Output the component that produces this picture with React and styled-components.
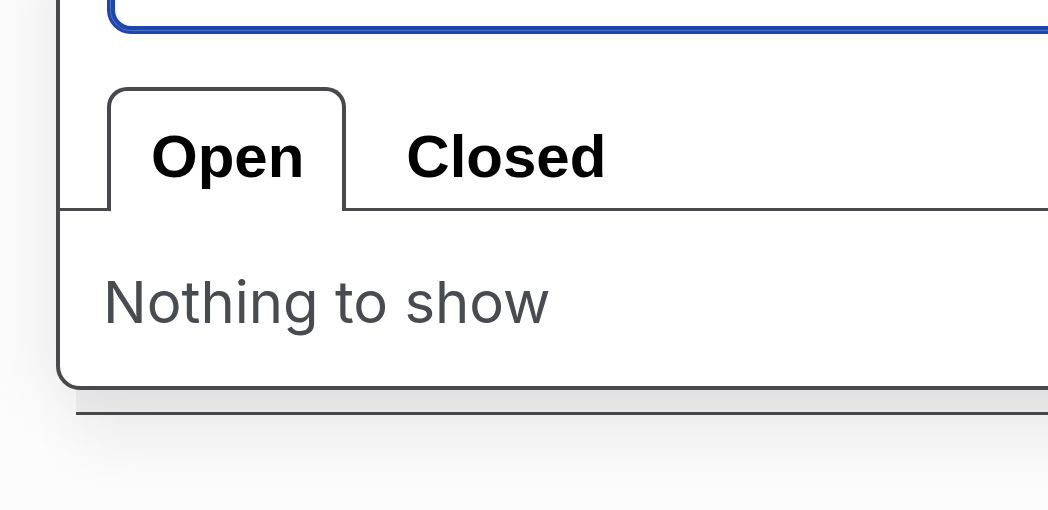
import React from 'react';
import styled, { createGlobalStyle } from 'styled-components';

const GlobalStyle = createGlobalStyle`
    html {
        overflow: hidden;
        background: #fcfcfc;
    }
    body {
        margin: 0;
        min-height: 510px;
    }
`;

export default function App() {
    return (
        <>
            <GlobalStyle />
            <Scene>
                <Panel>
                    <SearchBox />
                    <TabList>
                        <Tab active>Open</Tab>
                        <Tab>Closed</Tab>
                    </TabList>
                    <Empty>Nothing to show</Empty>
                </Panel>
                <StackCard />
            </Scene>
        </>
    );
}

const Scene = styled.div`
    display: flex;
    flex-direction: column;
    margin-top: -50px;
    padding-left: 56px;
    width: 1100px;
`;

const Panel = styled.div`
    position: relative;
    z-index: 1;
    background: #fff;
    border: 4px solid #47494c;
    border-radius: 24px;
    box-shadow: 0 10px 70px rgba(0, 0, 0, 0.1);
`;

const SearchBox = styled.div`
    margin: 11px 0 0 51px;
    height: 57px;
    border: 4px solid #1f46ad;
    border-radius: 20px;
    box-shadow: 0 0 0 1px #4d72cc, 0 0 0 4px #1f46ad;
    background: #fff;
`;

const TabList = styled.div`
    display: flex;
    gap: 16px;
    margin-top: 57px;
    padding-left: 47px;
    border-bottom: 3px solid #47494c;
`;

const Tab = styled.div`
    margin-bottom: -3px;
    padding: 31px 38px 20px 40px;
    border: 4px solid ${props => (props.active ? '#47494c' : 'transparent')};
    border-bottom: none;
    border-radius: 20px 20px 0 0;
    background: ${props => (props.active ? '#fff' : 'transparent')};
    font-family: "Liberation Sans", Arial, sans-serif;
    font-weight: 700;
    font-size: 60px;
    color: #000;
`;

const Empty = styled.div`
    padding: 56px 43px 49px;
    font-family: Inter, "Noto Sans", sans-serif;
    font-size: 58px;
    line-height: 70px;
    color: #484b50;
`;

const StackCard = styled.div`
    margin: -4px 0 0 20px;
    height: 26px;
    background: #f0f0f1;
    border-bottom: 3px solid #47494c;
    box-shadow: 0 30px 60px rgba(0, 0, 0, 0.07);
`;
